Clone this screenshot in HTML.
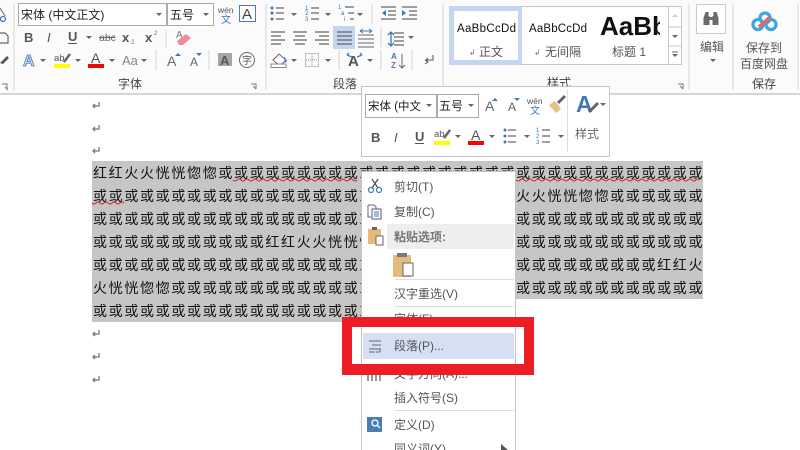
<!DOCTYPE html>
<html><head><meta charset="utf-8"><style>
html,body{margin:0;padding:0;background:#fff;width:800px;height:450px;overflow:hidden}
svg{display:block}
text{font-family:"Liberation Sans","Noto Sans CJK SC",sans-serif;fill:#444}
.b{font-family:"WenQuanYi Zen Hei","Noto Sans CJK SC",sans-serif;font-size:14px;fill:#111;letter-spacing:1.67px}
.m{font-size:12px;fill:#555}
.r{font-size:12px;fill:#444}
.ar{fill:#666}
.ln{stroke:#666;stroke-width:1.2;fill:none}
.sep{stroke:#d4d4d4;stroke-width:1}
</style></head><body>
<svg width="800" height="450" viewBox="0 0 800 450" xmlns="http://www.w3.org/2000/svg">
<defs><path id="a" d="M-3 0h6l-3 3z"/></defs>
<rect width="800" height="450" fill="#fff"/>
<!-- ribbon -->
<rect width="800" height="94" fill="#fbfbfb"/>
<rect y="93" width="800" height="2" fill="#d6d6d6"/>
<g class="sep">
<path d="M14 4V90M266 4V90M443 4V90M689 4V90M733 4V90M798 4V90M166 30V48M156 50V70M209 50V70M372 4V24M381 27V47M339 50V70M381 50V70M412 50V70"/>
</g>
<!-- left clipboard bits -->
<path d="M0 8l5 8" stroke="#666" fill="none"/><circle cx="3" cy="19" r="2.500" fill="none" stroke="#3f78b5" stroke-width="1.300"/>
<path d="M0 33h5l3 3v7H0" class="ln"/>
<path d="M0 63l7-7 2 2-6 6z" fill="#555"/>
<path d="M2 84h5v5M5 87l3 3" stroke="#777" fill="none"/>
<!-- font -->
<rect x="18.500" y="3.500" width="148" height="22" fill="#fff" stroke="#aaa"/>
<rect x="167.500" y="3.500" width="46" height="22" fill="#fff" stroke="#aaa"/>
<text x="21" y="19" style="font-size:12px;fill:#222">宋体 (中文正文)</text>
<text x="170" y="19" style="font-size:12px;fill:#222">五号</text>
<use href="#a" x="159" y="13" class="ar"/><use href="#a" x="206" y="13" class="ar"/>
<text x="218" y="13" style="font-size:8.500px;fill:#555">wén</text>
<text x="221" y="23" style="font-size:10px;fill:#3f78b5">文</text>
<rect x="239.500" y="5.500" width="16" height="16" fill="#fff" stroke="#4a7db5"/>
<text x="242" y="19" style="font-size:15px;fill:#444">A</text>
<text x="24" y="42" style="font-size:13px;font-weight:bold;fill:#555">B</text>
<text x="47" y="42" style="font-size:13px;font-style:italic;fill:#555">I</text>
<text x="68" y="41" style="font-size:13px;font-weight:bold;fill:#555">U</text><path d="M68 43.500h9" stroke="#555"/>
<use href="#a" x="89" y="36" class="ar"/>
<text x="99" y="41" style="font-size:10.500px;fill:#666">abc</text><path d="M99 37.500h16" stroke="#666"/>
<text x="122" y="42" style="font-size:13px;font-weight:bold;fill:#555">x</text><text x="131" y="44" style="font-size:6px;fill:#3f78b5">2</text>
<text x="145" y="42" style="font-size:13px;font-weight:bold;fill:#555">x</text><text x="154" y="35" style="font-size:6px;fill:#3f78b5">2</text>
<text x="176" y="38" style="font-size:10px;fill:#777">A</text>
<path d="M177 41l9-7 5 4-8 7h-4z" fill="#ec8c9b"/>
<text x="23" y="66" style="font-size:16px;font-weight:bold;fill:#cfe0f4;stroke:#3f78b5;stroke-width:.8">A</text>
<use href="#a" x="43" y="59" class="ar"/>
<text x="54" y="61" style="font-size:9.500px;fill:#555">ab</text><path d="M64 62l6-8" stroke="#666" stroke-width="2.500"/>
<rect x="54" y="64" width="16" height="4" fill="#ff0"/>
<use href="#a" x="78" y="59" class="ar"/>
<text x="91" y="63" style="font-size:14px;fill:#555">A</text><rect x="88" y="64" width="16" height="4" fill="#f00"/>
<use href="#a" x="112" y="59" class="ar"/>
<text x="122" y="65" style="font-size:13px;fill:#888">Aa</text>
<use href="#a" x="144" y="59" class="ar"/>
<text x="167" y="66" style="font-size:14px;fill:#666">A</text><path d="M175 56l3-3 3 3z" fill="#3f78b5"/>
<text x="190" y="66" style="font-size:12px;fill:#666">A</text><path d="M196 53h6l-3 3z" fill="#3f78b5"/>
<rect x="218" y="53" width="14" height="13" fill="#a6a6a6"/><text x="220" y="65" style="font-size:13px;font-weight:bold;fill:#555">A</text>
<circle cx="247" cy="60" r="7.500" fill="none" stroke="#666"/><text x="242" y="64" style="font-size:10px;fill:#555">字</text>
<text x="118" y="88" class="r">字体</text>
<path d="M251 84h5v5M253 86l3 3" stroke="#777" fill="none"/>
<!-- para -->
<g class="ln">
<path d="M276 8h8M276 13h8M276 19h8M311 8h8M311 13h8M311 19h8M345 7h9M348 13h6M350 19h4M271 32h14M271 36h10M271 40h14M271 44h10M293 32h14M295 36h10M293 40h14M295 44h10M315 32h14M319 36h10M315 40h14M319 44h10M394 33h10M394 37h10M394 41h10M394 45h10"/>
<path d="M381 7h15M388 11h8M388 15h8M381 19h15M402 7h15M409 11h8M409 15h8M402 19h15"/>
</g>
<rect x="333" y="26" width="22" height="23" fill="#c3d5f0"/>
<path d="M337 32h15M337 36h15M337 40h15M337 44h15" stroke="#666" stroke-width="1.200"/>
<path d="M358 35h16M358 39h16M358 43h16M358 47h16" stroke="#666"/>
<path d="M360 31h12M360 31l3-2M360 31l3 2M372 31l-3-2M372 31l-3 2" stroke="#3f78b5" fill="none"/>
<g fill="#3f78b5"><circle cx="272" cy="8" r="1.500"/><circle cx="272" cy="13" r="1.500"/><circle cx="272" cy="19" r="1.500"/></g>
<text x="305" y="10" style="font-size:6px;fill:#3f78b5">1</text><text x="305" y="15" style="font-size:6px;fill:#3f78b5">2</text><text x="305" y="21" style="font-size:6px;fill:#3f78b5">3</text>
<text x="338" y="9" style="font-size:6px;fill:#3f78b5">1</text><text x="341" y="15" style="font-size:6px;fill:#3f78b5">a</text><text x="344" y="21" style="font-size:6px;fill:#3f78b5">i</text>
<path d="M391 32v14M388 35l3-3 3 3M388 43l3 3 3-3" stroke="#3f78b5" fill="none" stroke-width="1.300"/>
<path d="M386 10l-4 3 4 3zM402 10l4 3-4 3z" fill="#3f78b5"/>
<use href="#a" x="294" y="13" class="ar"/><use href="#a" x="328" y="13" class="ar"/><use href="#a" x="360" y="13" class="ar"/><use href="#a" x="411" y="36" class="ar"/>
<path d="M273 60l6-6 7 6-6 6z" fill="#fff" stroke="#666"/><path d="M284 56l3 5-2 2z" fill="#3f78b5"/>
<rect x="271" y="64" width="15" height="3.500" fill="#fff" stroke="#888"/>
<use href="#a" x="294" y="59" class="ar"/>
<rect x="305.500" y="53.500" width="13" height="13" fill="none" stroke="#888" stroke-dasharray="1 1"/><path d="M312 54v12M306 60h12" stroke="#888" stroke-dasharray="1 1"/>
<use href="#a" x="328" y="59" class="ar"/>
<text x="348" y="66" style="font-size:15px;font-weight:bold;fill:#555">A</text>
<path d="M347 55l5 2M362 55l-5 2M347 55l2-2M362 55l-2-2" stroke="#3f78b5" fill="none" stroke-width="1.300"/>
<use href="#a" x="370" y="59" class="ar"/>
<text x="391" y="59" style="font-size:8px;font-weight:bold;fill:#3f78b5">A</text><text x="391" y="68" style="font-size:8px;font-weight:bold;fill:#8a5fb0">Z</text>
<path d="M402 54v14M399 65l3 3 3-3" stroke="#666" fill="none"/>
<path d="M433 55v5h-7m2-2l-2 2 2 2M425 60l3 2-3 2" stroke="#555" fill="none"/>
<text x="333" y="88" class="r">段落</text>
<!-- styles -->
<rect x="449.500" y="6.500" width="232" height="58" fill="#fff" stroke="#c6c6c6"/>
<rect x="449" y="6" width="73" height="59" fill="#c3d5f0"/>
<rect x="454" y="11" width="64" height="49" fill="#fff"/>
<text x="457" y="32" style="font-size:11.500px;fill:#111" textLength="59">AaBbCcDd</text>
<text x="469" y="55" style="font-size:8px;fill:#777">↲</text><text x="479" y="56" style="font-size:12px;fill:#555">正文</text>
<text x="529" y="32" style="font-size:11.500px;fill:#111" textLength="58">AaBbCcDd</text>
<text x="534" y="55" style="font-size:8px;fill:#777">↲</text><text x="545" y="56" style="font-size:12px;fill:#555">无间隔</text>
<svg x="600" y="8" width="60" height="34"><text x="0" y="27" style="font-size:26px;font-weight:bold;fill:#111">AaBb</text></svg>
<text x="612" y="56" style="font-size:12px;fill:#555">标题 1</text>
<path d="M668.500 6V65M668 27h14M668 46h14" stroke="#c6c6c6" fill="none"/>
<path d="M675 14l3 3h-6z" fill="#ccc"/><use href="#a" x="675" y="35" class="ar"/><path d="M672 52h6" stroke="#666"/><use href="#a" x="675" y="54" class="ar"/>
<text x="547" y="87" class="r">样式</text>
<path d="M678 84h5v5M680 86l3 3" stroke="#777" fill="none"/>
<!-- edit -->
<rect x="696.500" y="4.500" width="29" height="29" fill="#fff" stroke="#ccc"/>
<path d="M705.500 12h3v4h1v9h-6v-7zM713.500 12h3l2 6v7h-6v-9h1z" fill="#6a6a6a"/><rect x="709.500" y="17" width="3" height="3" fill="#6a6a6a"/>
<text x="700" y="51" style="font-size:12px;fill:#555">编辑</text>
<use href="#a" x="713" y="59" class="ar"/>
<circle cx="758" cy="24.500" r="5" fill="none" stroke="#3fa7e0" stroke-width="3.300"/><circle cx="771" cy="24.500" r="5" fill="none" stroke="#3fa7e0" stroke-width="3.300"/>
<circle cx="765" cy="18" r="5" fill="none" stroke="#3fa7e0" stroke-width="3.300"/>
<path d="M759 27l11-10" stroke="#f0606a" stroke-width="3.300"/>
<text x="746" y="52" style="font-size:12px;fill:#555">保存到</text>
<text x="740" y="68" style="font-size:12px;fill:#555">百度网盘</text>
<text x="752" y="88" class="r">保存</text>
<!-- doc -->
<rect x="92" y="161" width="611" height="138" fill="#c6c6c6"/>
<rect x="92" y="299" width="300" height="23" fill="#c6c6c6"/>
<g class="b">
<text class="b" x="93" y="178">红红火火恍恍惚惚或或或或或或或或或或或或或或或或或或或或或或或或或或或或或或或</text>
<text class="b" x="93" y="201">或或或或或或或或或或或或或或或或或或或或或或或或或红红火火恍恍惚惚或或或或或或</text>
<text class="b" x="93" y="224">或或或或或或或或或或或或或或或或或或或或或或或或或或或或或或或或或或或或或或或</text>
<text class="b" x="93" y="247">或或或或或或或或或或或红红火火恍恍惚惚或或或或或或或或或或或或或或或或或或或或</text>
<text class="b" x="93" y="270">或或或或或或或或或或或或或或或或或或或或或或或或或或或或或或或或或或或或红红火</text>
<text class="b" x="93" y="293">火恍恍惚惚或或或或或或或或或或或或或或或或或或或或或或或或或或或或或或或或或或</text>
<text class="b" x="93" y="316">或或或或或或或或或或或或或或或或或或</text>
</g>
<path d="M233 180q2 2 4 0t4 0 4 0 4 0 4 0 4 0 4 0 4 0 4 0 4 0 4 0 4 0 4 0 4 0 4 0 4 0 4 0 4 0 4 0 4 0 4 0 4 0 4 0 4 0 4 0 4 0 4 0 4 0 4 0 4 0 4 0" stroke="#d22" fill="none"/>
<path d="M516 180q2 2 4 0t4 0 4 0 4 0 4 0 4 0 4 0 4 0 4 0 4 0 4 0 4 0 4 0 4 0 4 0 4 0 4 0 4 0 4 0 4 0 4 0 4 0 4 0 4 0 4 0 4 0 4 0 4 0 4 0 4 0 4 0 4 0 4 0 4 0 4 0 4 0 4 0 4 0 4 0 4 0 4 0 4 0 4 0 4 0 4 0 4 0" stroke="#d22" fill="none"/>
<path d="M92 203q2 2 4 0t4 0 4 0 4 0 4 0 4 0 4 0 4 0" stroke="#d22" fill="none"/>
<g fill="none" stroke="#777" stroke-width="1.300"><path d="M99 102v4h-6m2-2l-2 2 2 2"/><path d="M99 125v4h-6m2-2l-2 2 2 2"/><path d="M99 147v4h-6m2-2l-2 2 2 2"/><path d="M99 330v4h-6m2-2l-2 2 2 2"/><path d="M99 353v4h-6m2-2l-2 2 2 2"/><path d="M99 376v4h-6m2-2l-2 2 2 2"/></g>
<!-- menu -->
<rect x="361.500" y="171.500" width="154" height="290" fill="#fff" stroke="#c4c4c4"/>
<rect x="387" y="224" width="127" height="25" fill="#eeeeee"/>
<path d="M395 279.500h119M395 306.500h119M395 410.500h119" stroke="#ddd"/>
<text class="m" x="394" y="191">剪切(T)</text>
<text class="m" x="394" y="216">复制(C)</text>
<text class="m" x="394" y="241" style="font-weight:bold;fill:#777">粘贴选项:</text>
<text class="m" x="394" y="298">汉字重选(V)</text>
<text class="m" x="394" y="323">字体(F)...</text>
<text class="m" x="394" y="378">文字方向(A)...</text>
<text class="m" x="394" y="402">插入符号(S)</text>
<text class="m" x="394" y="429">定义(D)</text>
<text class="m" x="394" y="453">同义词(Y)</text>
<path d="M501 444l7 6h-7z" fill="#555"/>
<circle cx="371" cy="190" r="2.500" fill="none" stroke="#3f78b5" stroke-width="1.200"/><circle cx="379" cy="190" r="2.500" fill="none" stroke="#3f78b5" stroke-width="1.200"/>
<path d="M372 188l6-9M378 188l-6-9" stroke="#555" stroke-width="1.300"/>
<path d="M368 205h6l2 2v3M368 205v12h3" fill="#fff" stroke="#667"/><rect x="372" y="209" width="9" height="10" fill="#fff" stroke="#557"/><path d="M374 212h5M374 214h5M374 216h5" stroke="#3f78b5"/>
<rect x="368" y="229" width="13" height="15" fill="#e6bb7a"/><rect x="372" y="227" width="5" height="3" fill="#666"/><rect x="376" y="236" width="7" height="9" fill="#fff" stroke="#666"/>
<rect x="393" y="255" width="18" height="22" fill="#e6bb7a"/><rect x="397" y="253" width="10" height="4" fill="#777"/><rect x="403" y="263" width="10" height="13" fill="#fff" stroke="#666"/>
<path d="M368 372v9M372 372v9M376 372v9M380 372v9" stroke="#555" stroke-width="1.200"/>
<rect x="367" y="417" width="15" height="15" fill="#4a7db5"/><circle cx="375" cy="423" r="3" fill="none" stroke="#fff" stroke-width="1.300"/><path d="M377 425l3 3" stroke="#fff" stroke-width="1.300"/>
<!-- highlight -->
<rect x="363" y="333" width="151" height="26" fill="#d5e1f2"/>
<path d="M369 341h12M372 345h9M369 349h12M369 352h6" stroke="#666" fill="none"/><path d="M380 349v3h-4" stroke="#3f78b5" fill="none"/>
<text class="m" x="394" y="350">段落(P)...</text>
<!-- red -->
<path d="M342 317h192v58H342zM352 327v37h172v-37z" fill="#ee1c25" fill-rule="evenodd"/>
<!-- mini toolbar -->
<rect x="361.500" y="86.500" width="248" height="70" fill="#fff" stroke="#c4c4c4"/>
<rect x="365.500" y="94.500" width="71" height="23" fill="#fff" stroke="#aaa"/>
<rect x="437.500" y="94.500" width="41" height="23" fill="#fff" stroke="#aaa"/>
<text x="368" y="110" style="font-size:11.500px;fill:#222">宋体 (中文</text>
<text x="439" y="110" style="font-size:12px;fill:#222">五号</text>
<use href="#a" x="429" y="104" class="ar"/><use href="#a" x="471" y="104" class="ar"/>
<text x="485" y="111" style="font-size:14px;fill:#666">A</text><path d="M492 101l3-3 3 3z" fill="#3f78b5"/>
<text x="508" y="111" style="font-size:12px;fill:#666">A</text><path d="M514 98h6l-3 3z" fill="#3f78b5"/>
<text x="527" y="104" style="font-size:8.500px;fill:#555">wén</text><text x="530" y="114" style="font-size:10px;fill:#3f78b5">文</text>
<path d="M549 105l7 8 5-4-6-8z" fill="#e7c088"/><path d="M558 103l7-7" stroke="#666" stroke-width="3"/>
<path d="M567.500 90v62" stroke="#ddd"/>
<text x="576" y="112" style="font-size:23px;font-weight:bold;fill:#3f78b5">A</text><path d="M589 112l9-9" stroke="#666" stroke-width="3"/>
<use href="#a" x="603" y="103" class="ar"/>
<text x="575" y="138" style="font-size:12px;fill:#666">样式</text>
<text x="371" y="142" style="font-size:13px;font-weight:bold;fill:#555">B</text>
<text x="394" y="142" style="font-size:13px;font-style:italic;fill:#555">I</text>
<text x="415" y="141" style="font-size:13px;font-weight:bold;fill:#555">U</text><path d="M415 143.500h9" stroke="#555"/>
<text x="434" y="137" style="font-size:9.500px;fill:#555">ab</text><path d="M444 138l6-8" stroke="#666" stroke-width="2.500"/><rect x="434" y="141" width="16" height="4" fill="#ff0"/>
<use href="#a" x="458" y="135" class="ar"/>
<text x="471" y="140" style="font-size:14px;fill:#555">A</text><rect x="468" y="141" width="16" height="4" fill="#f00"/>
<use href="#a" x="492" y="135" class="ar"/>
<g fill="#3f78b5"><circle cx="505" cy="130" r="1.500"/><circle cx="505" cy="136" r="1.500"/><circle cx="505" cy="142" r="1.500"/></g>
<text x="536" y="132" style="font-size:6px;fill:#3f78b5">1</text><text x="536" y="138" style="font-size:6px;fill:#3f78b5">2</text><text x="536" y="144" style="font-size:6px;fill:#3f78b5">3</text>
<path d="M508 130h8M508 136h8M508 142h8M542 130h8M542 136h8M542 142h8" class="ln"/>
<use href="#a" x="527" y="135" class="ar"/><use href="#a" x="561" y="135" class="ar"/>
</svg>
</body></html>
